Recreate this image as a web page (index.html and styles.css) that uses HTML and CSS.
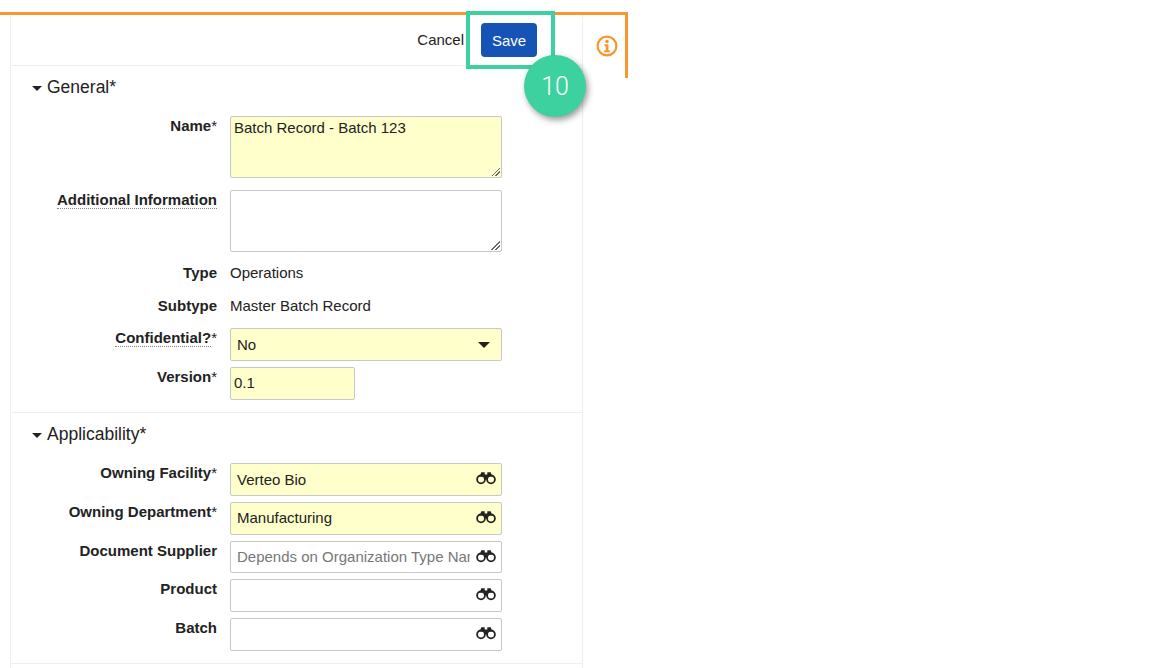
FILE: index.html
```html
<!DOCTYPE html>
<html lang="en">
<head>
<meta charset="utf-8">
<title>Batch Record</title>
<link rel="stylesheet" href="styles.css">
</head>
<body>
<svg class="defs" width="0" height="0" aria-hidden="true">
  <symbol id="binoculars" viewBox="0 0 20 14">
    <path d="M5.3 1.2h3.4v2.4h2.6V1.2h3.4l1.2 3.2 1 1.2H3.100l1-1.200z" fill="#222"/>
    <path d="M8.600 5h2.800v3.500H8.600z" fill="#222"/>
    <circle cx="5" cy="8.400" r="3.900" fill="none" stroke="#222" stroke-width="1.800"/>
    <circle cx="15" cy="8.400" r="3.900" fill="none" stroke="#222" stroke-width="1.800"/>
  </symbol>
</svg>
<div class="frame">
  <main class="panel">
    <header class="toolbar">
      <a class="cancel">Cancel</a>
      <button class="save">Save</button>
    </header>
    <section class="section section-general">
      <h2 class="section-title"><span class="caret"></span>General*</h2>
      <div class="row row-area">
        <label class="label">Name<span class="req">*</span></label>
        <div class="field field-area required">Batch Record - Batch 123<span class="grip"></span></div>
      </div>
      <div class="row row-area">
        <label class="label"><span class="hint">Additional Information</span></label>
        <div class="field field-area">&nbsp;<span class="grip"></span></div>
      </div>
      <div class="row row-text">
        <label class="label">Type</label>
        <div class="value">Operations</div>
      </div>
      <div class="row row-text">
        <label class="label">Subtype</label>
        <div class="value">Master Batch Record</div>
      </div>
      <div class="row row-input">
        <label class="label"><span class="hint">Confidential?</span><span class="req">*</span></label>
        <div class="field field-input required"><span class="field-text">No</span><span class="select-caret"></span></div>
      </div>
      <div class="row row-input">
        <label class="label">Version<span class="req">*</span></label>
        <div class="field field-input field-short required"><span class="field-text">0.1</span></div>
      </div>
    </section>
    <section class="section section-applic">
      <h2 class="section-title"><span class="caret"></span>Applicability*</h2>
      <div class="row row-input">
        <label class="label">Owning Facility<span class="req">*</span></label>
        <div class="field field-input required"><span class="field-text">Verteo Bio</span><svg class="bino"><use href="#binoculars"/></svg></div>
      </div>
      <div class="row row-input">
        <label class="label">Owning Department<span class="req">*</span></label>
        <div class="field field-input required"><span class="field-text">Manufacturing</span><svg class="bino"><use href="#binoculars"/></svg></div>
      </div>
      <div class="row row-input">
        <label class="label">Document Supplier</label>
        <div class="field field-input"><span class="field-text placeholder">Depends on Organization Type Name</span><svg class="bino"><use href="#binoculars"/></svg></div>
      </div>
      <div class="row row-input">
        <label class="label">Product</label>
        <div class="field field-input"><span class="field-text">&nbsp;</span><svg class="bino"><use href="#binoculars"/></svg></div>
      </div>
      <div class="row row-input">
        <label class="label">Batch</label>
        <div class="field field-input"><span class="field-text">&nbsp;</span><svg class="bino"><use href="#binoculars"/></svg></div>
      </div>
    </section>
  </main>
  <aside class="side">
    <svg class="info" width="22" height="22" viewBox="0 0 22 22">
      <circle cx="11" cy="11" r="9.4" fill="none" stroke="#f7982f" stroke-width="2.2"/>
      <circle cx="11" cy="6.6" r="1.8" fill="#f7982f"/>
      <path d="M8.4 9.2h4v6h1.4v2H8.2v-2h1.5v-4H8.4z" fill="#f7982f"/>
    </svg>
  </aside>
  <div class="highlight"></div>
  <div class="badge">10</div>
</div>
</body>
</html>
```
FILE: styles.css
```css
* { box-sizing: border-box; }
html, body { margin: 0; padding: 0; background: #fff; height: 668px; overflow: hidden; }
body { font-family: "Liberation Sans", Arial, sans-serif; font-size: 15px; color: #222; }
.defs { position: absolute; }
.frame {
  position: relative;
  width: 628px;
  margin-top: 12px;
  height: 656px;
  border-top: 3px solid #f7982f;
  display: flex;
  padding-left: 10px;
}
.frame::after {
  content: "";
  position: absolute;
  right: 0;
  top: -3px;
  width: 3px;
  height: 66px;
  background: #f7982f;
}
.panel {
  width: 573px;
  border-left: 1px solid #eee;
  border-right: 1px solid #eee;
  height: 100%;
}
.toolbar {
  height: 51px;
  border-bottom: 1px solid #eee;
  display: flex;
  justify-content: flex-end;
  align-items: flex-start;
  padding: 8px 45px 0 0;
  gap: 17px;
}
.cancel { line-height: 34px; color: #222; }
.save {
  width: 56px;
  height: 34px;
  border: 0;
  border-radius: 4px;
  background: #1553b7;
  color: #fff;
  font: inherit;
  padding: 0;
}
.section { border-bottom: 1px solid #eee; }
.section-general { height: 347px; padding-top: 9px; }
.section-applic { height: 251px; padding-top: 9px; }
.section-title {
  margin: 0;
  height: 24px;
  line-height: 24px;
  font-size: 17.5px;
  font-weight: 400;
  display: flex;
  align-items: center;
  padding-left: 21px;
  color: #222;
}
.caret {
  width: 0;
  height: 0;
  border: 5px solid transparent;
  border-top-color: #222;
  border-bottom-width: 0;
  margin-right: 5px;
  margin-top: 3px;
}
.row {
  display: grid;
  grid-template-columns: 206px 272px;
  column-gap: 13px;
  align-items: start;
}
.section-title + .row { margin-top: 17px; }
.row-area { margin-bottom: 12px; }
.row-area + .row-text { margin-top: -1px; }
.row-text { height: 33px; }
.row-text + .row-input { margin-top: -1px; }
.row-input { margin-bottom: 6px; }
.label { font-weight: 700; text-align: right; line-height: 20px; }
.req { font-weight: 400; }
.hint { border-bottom: 1px dotted #888; }
.value { line-height: 20px; }
.field {
  position: relative;
  border: 1px solid #c8c8c8;
  border-radius: 2px;
  background: #fff;
  width: 272px;
}
.required { background: #ffffcc; }
.field-area { height: 62px; padding: 1px 3px; line-height: 20px; }
.field-input { height: 32.75px; display: flex; align-items: center; padding: 0.5px 6px 0; }
.field-short { width: 125px; padding: 0.5px 3px 0; }
.field-text { flex: 0 0 233px; overflow: hidden; white-space: nowrap; line-height: 20px; }
.placeholder { color: #777; }
.grip {
  position: absolute;
  right: 1px;
  bottom: 1px;
  width: 9px;
  height: 9px;
  background: linear-gradient(135deg, transparent 50%, #666 50%, #666 58%, transparent 58%, transparent 72%, #666 72%, #666 80%, transparent 80%);
}
.select-caret {
  position: absolute;
  right: 11px;
  top: 13px;
  width: 0;
  height: 0;
  border: 6px solid transparent;
  border-top-color: #222;
  border-bottom-width: 0;
}
.bino { position: absolute; right: 5px; top: 7px; width: 20px; height: 14px; }
.side { flex: 1; padding: 20px 0 0 13px; }
.info { display: block; }
.highlight {
  position: absolute;
  left: 466px;
  top: -4px;
  width: 89px;
  height: 58px;
  border: 4px solid #3ed1a0;
}
.badge {
  position: absolute;
  left: 524px;
  top: 40px;
  width: 62px;
  height: 62px;
  border-radius: 50%;
  background: #3ed1a0;
  color: #fff;
  font-family: Roboto, "Liberation Sans", sans-serif;
  font-weight: 300;
  font-size: 25px;
  line-height: 64px;
  text-align: center;
  box-shadow: 2px 3px 6px rgba(0,0,0,.4);
}
```
